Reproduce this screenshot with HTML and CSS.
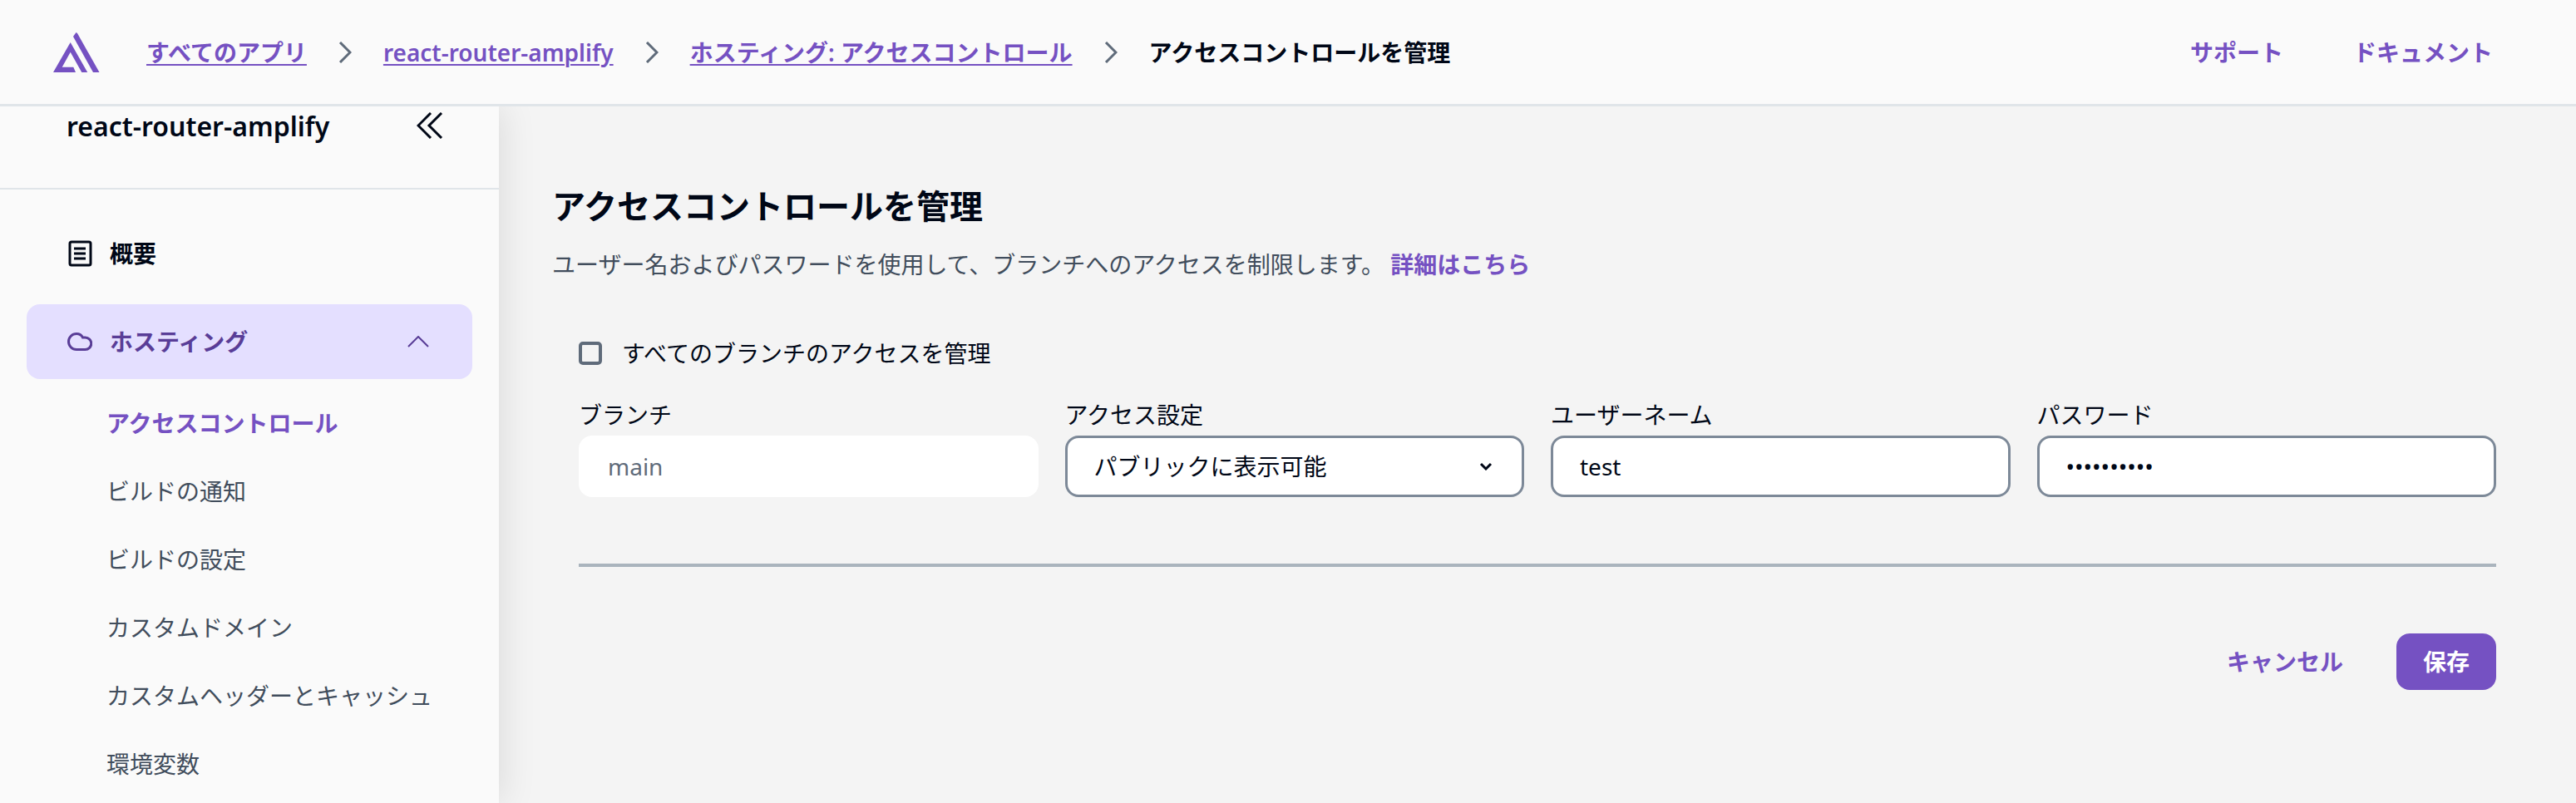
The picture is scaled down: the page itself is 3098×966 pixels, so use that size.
FILE: index.html
```html
<!DOCTYPE html>
<html lang="ja">
<head>
<meta charset="utf-8">
<meta name="viewport" content="width=device-width, initial-scale=1">
<title>アクセスコントロールを管理</title>
<link rel="stylesheet" href="styles.css">
</head>
<body>
<header class="topbar">
  <a class="logo" href="#" aria-label="Amplify">
    <svg width="56" height="48" viewBox="0 0 56 48" fill="currentColor" aria-hidden="true">
      <path d="M20.700 12L0 48H27L24.300 41.700H10.700L20.700 23.700L34.300 48H41.200Z"/>
      <path d="M27.500 0L24 5L48 48H55.500L29 1Z"/>
    </svg>
  </a>
  <nav class="crumbs" aria-label="パンくず">
    <a href="#">すべてのアプリ</a>
    <svg class="sep" width="16" height="26" viewBox="0 0 16 26" aria-hidden="true"><path d="M2 1L14 13L2 25"/></svg>
    <a href="#">react-router-amplify</a>
    <svg class="sep" width="16" height="26" viewBox="0 0 16 26" aria-hidden="true"><path d="M2 1L14 13L2 25"/></svg>
    <a href="#">ホスティング: アクセスコントロール</a>
    <svg class="sep" width="16" height="26" viewBox="0 0 16 26" aria-hidden="true"><path d="M2 1L14 13L2 25"/></svg>
    <span class="current" aria-current="page">アクセスコントロールを管理</span>
  </nav>
  <nav class="help">
    <a href="#">サポート</a>
    <a href="#">ドキュメント</a>
  </nav>
</header>
<div class="layout">
  <aside class="sidebar">
    <div class="app-head">
      <span class="app-name">react-router-amplify</span>
      <button class="collapse" type="button" aria-label="サイドバーを閉じる">
        <svg width="32" height="32" viewBox="0 0 32 32" aria-hidden="true"><path d="M17 1L2 16L17 31M30 1L15 16L30 31"/></svg>
      </button>
    </div>
    <nav class="menu">
      <a class="item" href="#">
        <svg class="icon" width="30" height="32" viewBox="0 0 30 32" aria-hidden="true"><rect x="3" y="2" width="25" height="28" rx="2"/><path d="M8 10H22M8 16H22M8 22H22"/></svg>
        概要
      </a>
      <button class="item open" type="button" aria-expanded="true">
        <svg class="icon" width="30" height="22" viewBox="0 0 30 22" aria-hidden="true"><path d="M11 20.500A9.500 9.500 0 0 1 11 1.500C14.500 1.500 17 3 18.500 6H21.500A7.250 7.250 0 0 1 21.500 20.500Z"/></svg>
        ホスティング
        <svg class="chev" width="26" height="14" viewBox="0 0 26 14" aria-hidden="true"><path d="M1 13L13 1L25 13"/></svg>
      </button>
      <div class="sub">
        <a class="active" href="#">アクセスコントロール</a>
        <a href="#">ビルドの通知</a>
        <a href="#">ビルドの設定</a>
        <a href="#">カスタムドメイン</a>
        <a href="#">カスタムヘッダーとキャッシュ</a>
        <a href="#">環境変数</a>
      </div>
    </nav>
  </aside>
  <main class="content">
    <h1>アクセスコントロールを管理</h1>
    <p class="desc">ユーザー名およびパスワードを使用して、ブランチへのアクセスを制限します。 <a href="#">詳細はこちら</a></p>
    <form class="panel">
      <label class="check"><input type="checkbox">すべてのブランチのアクセスを管理</label>
      <div class="fields">
        <div class="field">
          <label for="branch">ブランチ</label>
          <input class="readonly" id="branch" type="text" value="main" readonly>
        </div>
        <div class="field">
          <label for="access">アクセス設定</label>
          <div class="select">
            <select id="access"><option>パブリックに表示可能</option></select>
            <svg class="caret" width="16" height="10" viewBox="0 0 16 10" aria-hidden="true"><path d="M2 2L8 8L14 2"/></svg>
          </div>
        </div>
        <div class="field">
          <label for="user">ユーザーネーム</label>
          <input id="user" type="text" value="test">
        </div>
        <div class="field">
          <label for="pass">パスワード</label>
          <input id="pass" type="password" value="password12">
        </div>
      </div>
      <hr>
      <div class="actions">
        <button class="cancel" type="button">キャンセル</button>
        <button class="save" type="button">保存</button>
      </div>
    </form>
  </main>
</div>
</body>
</html>
```

FILE: styles.css
```css
*, *::before, *::after { box-sizing: border-box; }

body {
  margin: 0;
  height: 100vh;
  display: flex;
  flex-direction: column;
  overflow: hidden;
  background: #f4f4f4;
  color: #000716;
  font: 28px/42px "Noto Sans", "Noto Sans CJK JP", sans-serif;
}

a { color: #7551c2; font-weight: 600; text-decoration: none; }

button, input, select { font: inherit; color: inherit; }

button { border: 0; background: none; cursor: pointer; }

svg { display: block; flex: none; }

.topbar {
  position: relative;
  z-index: 2;
  flex: none;
  display: flex;
  align-items: center;
  height: 128px;
  padding: 0 100px 0 64px;
  border-bottom: 3px solid #e0e5e9;
  background: #fafafa;
}

.logo { margin-right: 56px; }

.crumbs {
  flex: 1;
  display: flex;
  align-items: center;
  gap: 38px;
  white-space: nowrap;
}

.crumbs a { text-decoration: underline; text-decoration-thickness: 2px; text-underline-offset: 3px; }

.sep { fill: none; stroke: #5f6b7a; stroke-width: 3; }

.current { font-weight: 600; }

.help { display: flex; gap: 84px; }

.layout { flex: 1; min-height: 0; display: flex; }

.sidebar {
  position: relative;
  z-index: 1;
  flex: none;
  width: 600px;
  background: #fafafa;
  box-shadow: 4px 0 40px rgba(0, 0, 0, .1);
}

.app-head {
  display: flex;
  justify-content: space-between;
  height: 100px;
  padding: 0 67px 0 80px;
  border-bottom: 2px solid #e0e5e9;
}

.app-name { font-size: 32px; line-height: 48px; font-weight: 600; }

.collapse { height: 46px; padding: 0; }

.collapse svg { fill: none; stroke: #000716; stroke-width: 3; }

.menu { padding: 32px 32px 0; }

.item {
  display: flex;
  align-items: center;
  gap: 21px;
  width: 100%;
  height: 90px;
  margin-bottom: 16px;
  padding: 0 52px 0 49px;
  border-radius: 16px;
  color: #000716;
  font-weight: 600;
  text-align: left;
}

.open { background: #e4dfff; color: #593d97; }

.icon { fill: none; stroke: currentColor; stroke-width: 3; }

.chev { margin-left: auto; fill: none; stroke: currentColor; stroke-width: 2; }

.sub { display: grid; gap: 40px; padding: 16px 0 0 96px; }

.sub a { color: #414d5c; font-weight: 400; white-space: nowrap; }

.sub .active { color: #7551c2; font-weight: 600; }

.content { flex: 1; min-width: 0; padding: 92px 64px 0; }

h1 { margin: 0; font-size: 40px; line-height: 56px; }

.desc { margin: 21px 0 0; color: #414d5c; }

.desc a { font-weight: 700; }

.panel { padding: 65px 32px 0; }

.check { display: flex; align-items: center; gap: 24px; }

.check input {
  appearance: none;
  width: 28px;
  height: 28px;
  margin: 0;
  border: 4px solid #5f6b7a;
  border-radius: 5px;
}

.fields {
  display: grid;
  grid-template-columns: repeat(4, minmax(0, 1fr));
  gap: 32px;
  margin-top: 32px;
}

.field label { display: block; }

.field input, .field select {
  display: block;
  width: 100%;
  height: 74px;
  margin: 4px 0 0;
  padding: 0 32px;
  border: 3px solid #7d8998;
  border-radius: 16px;
  background: #fff;
}

.field .readonly { border-color: #fff; color: #5f6b7a; }

.select { position: relative; }

.field select { appearance: none; }

.caret {
  position: absolute;
  top: 32px;
  right: 38px;
  fill: none;
  stroke: #000716;
  stroke-width: 3;
  pointer-events: none;
}

hr { height: 4px; margin: 80px 0; border: 0; background: #aab4bd; }

.actions { display: flex; justify-content: flex-end; gap: 32px; }

.actions button { height: 68px; padding: 0 32px; border-radius: 16px; font-weight: 600; }

.cancel { color: #7551c2; }

.save { background: #7551c2; color: #fff; }
```
